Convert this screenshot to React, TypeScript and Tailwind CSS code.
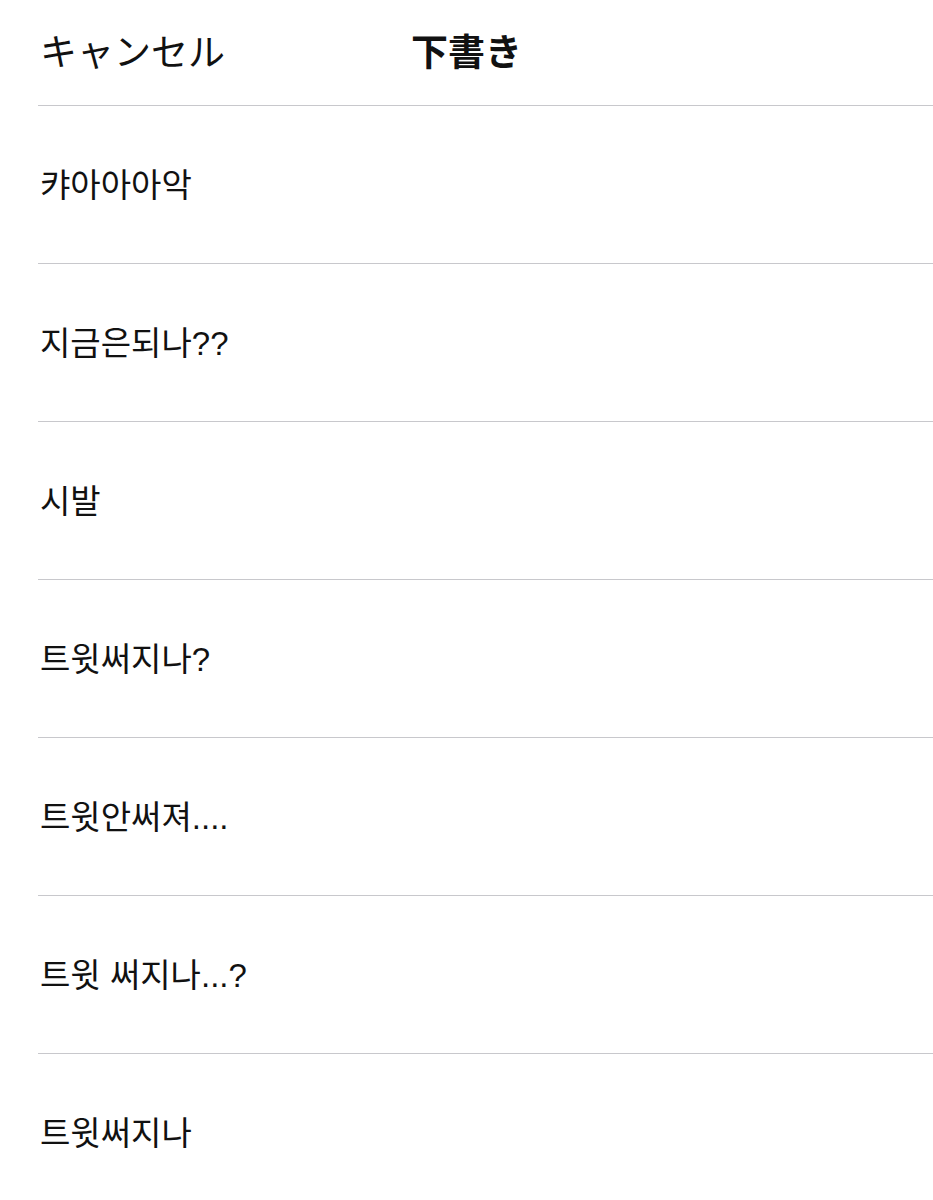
import React from "react";

const drafts = [
  "캬아아아악",
  "지금은되나??",
  "시발",
  "트윗써지나?",
  "트윗안써져....",
  "트윗 써지나...?",
  "트윗써지나",
];

export default function App() {
  return (
    <div
      className="w-[933px] h-[1200px] bg-white text-[#111111] overflow-hidden"
      style={{ fontFamily: '"Liberation Sans", "Noto Sans CJK KR", "Noto Sans CJK JP", sans-serif' }}
    >
      <div className="h-[105px] grid grid-cols-[1fr_auto_1fr] items-center px-[40px] pt-[2px]">
        <div
          className="text-[37px] leading-none"
          style={{ fontFamily: '"Liberation Sans", "Noto Sans CJK JP", sans-serif' }}
        >
          キャンセル
        </div>
        <div
          className="text-[37px] font-bold leading-none"
          style={{ fontFamily: '"Liberation Sans", "Noto Sans CJK JP", sans-serif' }}
        >
          下書き
        </div>
        <div />
      </div>
      <div className="ml-[38px] border-b border-[#c8c8cc]" />
      {drafts.map((d, i) => (
        <div
          key={i}
          className="ml-[38px] h-[158px] border-b border-[#c8c8cc] flex items-center pl-[2px] pt-[2px]"
        >
          <span className="text-[33px] leading-none">{d}</span>
        </div>
      ))}
    </div>
  );
}
